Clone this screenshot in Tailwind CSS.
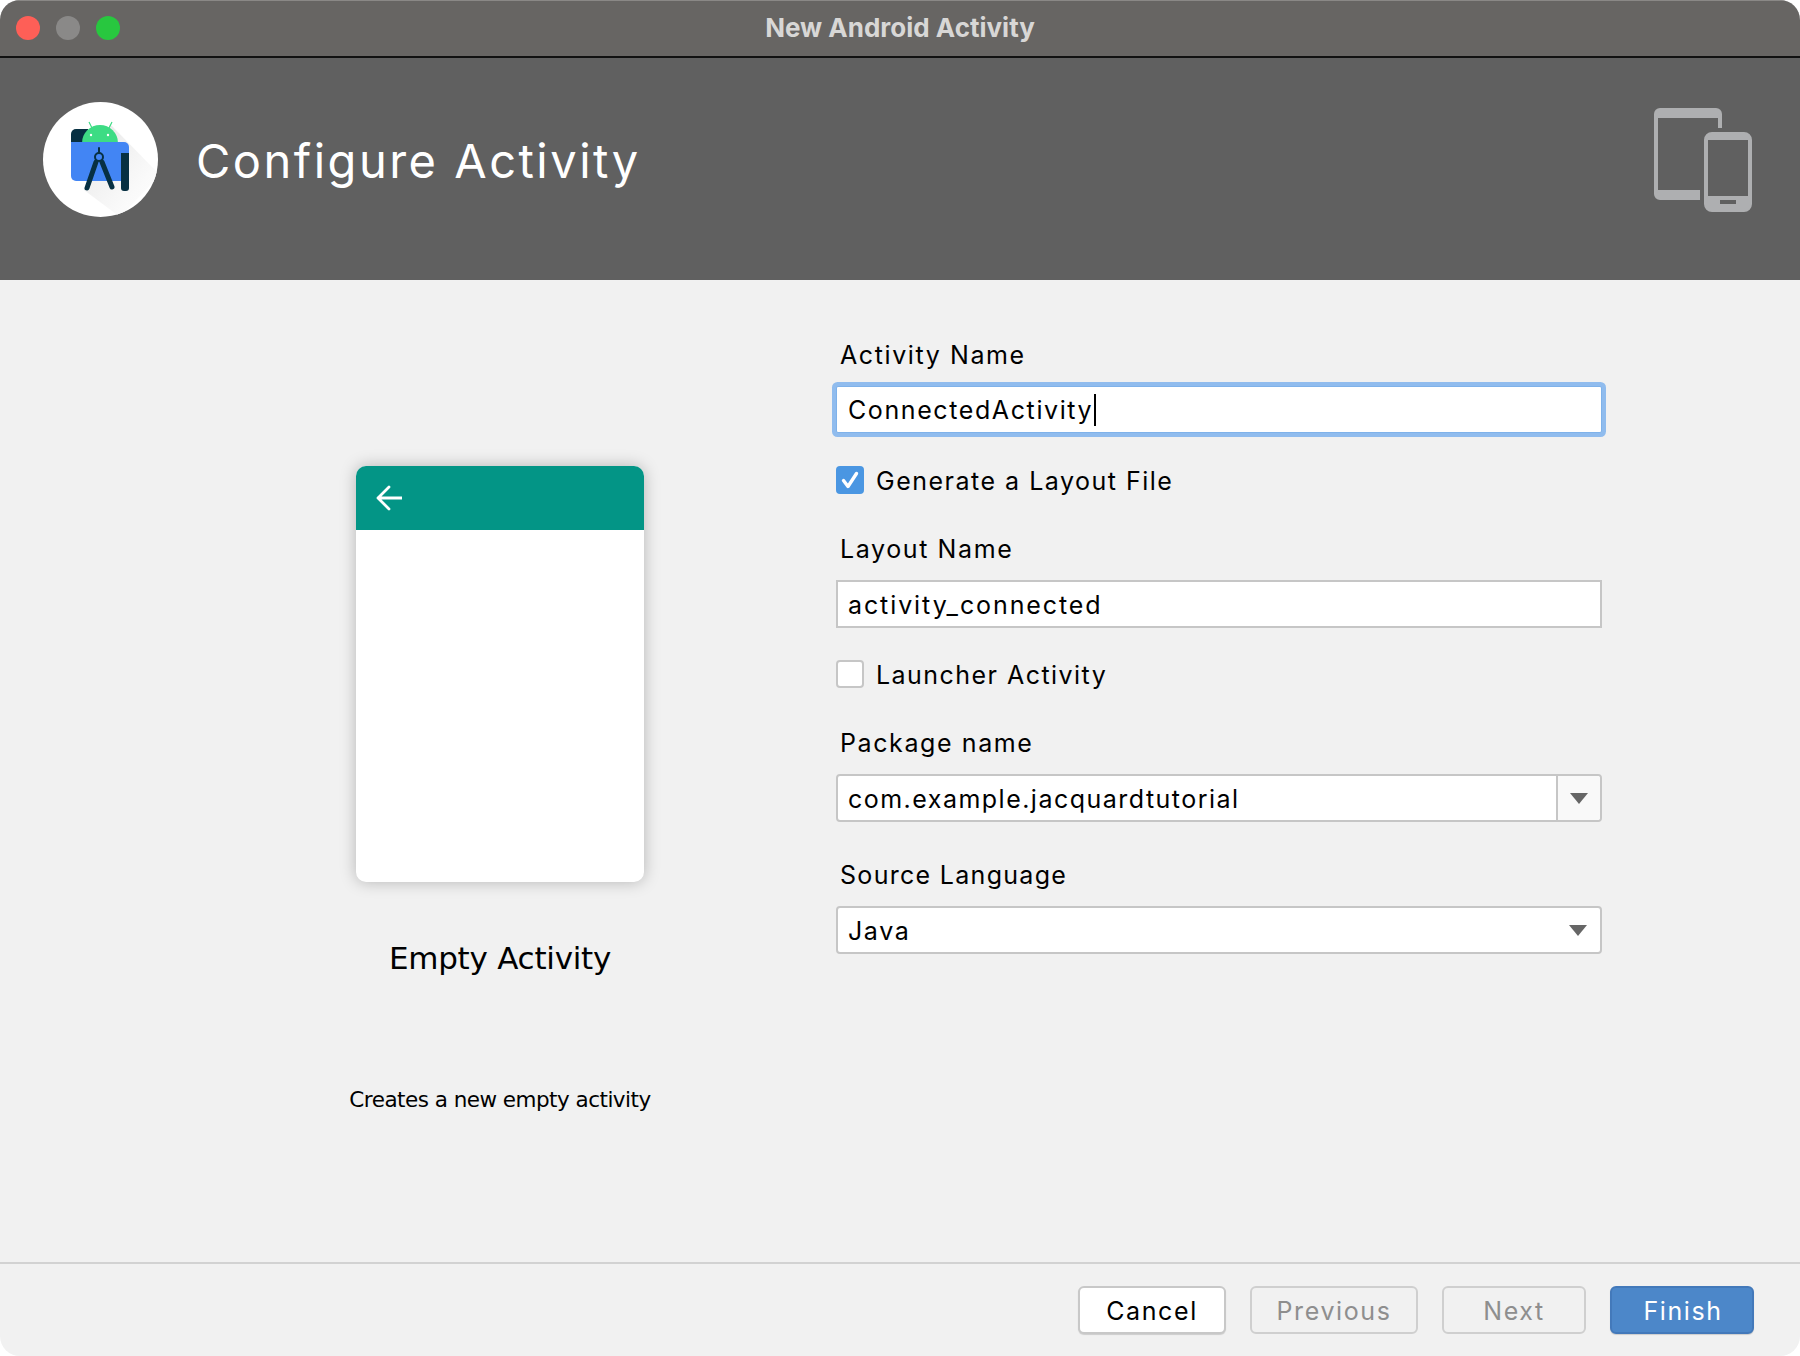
<!DOCTYPE html>
<html lang="en">

<head>
    <meta charset="UTF-8">
    <meta name="viewport" content="width=device-width, initial-scale=1.0">
    <title>New Android Activity</title>
    <script src="https://cdn.jsdelivr.net/npm/@tailwindcss/browser@4"></script>
</head>

<body class="bg-white font-['Inter',sans-serif] text-black">
    <div class="w-[1800px] h-[1356px] flex flex-col rounded-[20px] overflow-hidden bg-[#f1f1f1]">

        <!-- Title bar -->
        <div class="relative h-[58px] shrink-0 flex items-center bg-[#676563] border-t border-[#8a8886] border-b-2 border-b-[#111111] pb-[1px]">
            <div class="flex gap-4 pl-4">
                <div class="w-6 h-6 rounded-full bg-[#fe5f57]"></div>
                <div class="w-6 h-6 rounded-full bg-[#8a8988]"></div>
                <div class="w-6 h-6 rounded-full bg-[#28c73f]"></div>
            </div>
            <div class="absolute inset-x-0 text-center text-[26px] font-bold text-[#d8d7d6] pb-[2px]">New Android Activity</div>
        </div>

        <!-- Header -->
        <div class="h-[222px] shrink-0 bg-[#606060] flex items-center pl-[43px] pr-[48px] pb-[20px]">
            <svg width="115" height="115" viewBox="43 102 115 115" class="shrink-0">
                <defs>
                    <clipPath id="logoClip"><circle cx="100.5" cy="159.5" r="57.5"></circle></clipPath>
                    <linearGradient id="logoShadow" x1="0" y1="0" x2="1" y2="1">
                        <stop offset="0" stop-color="#e6e6e6"></stop>
                        <stop offset="0.7" stop-color="#fafafa"></stop>
                        <stop offset="1" stop-color="#ffffff"></stop>
                    </linearGradient>
                </defs>
                <circle cx="100.5" cy="159.5" r="57.5" fill="#ffffff"></circle>
                <path d="M110 124 L160 175 L120 217 L84 190 Z" fill="url(#logoShadow)" clip-path="url(#logoClip)"></path>
                <path d="M76 129h12v14H71v-9a5 5 0 0 1 5-5z" fill="#073042"></path>
                <path d="M82 143a18 18 0 0 1 36 0z" fill="#3ddc84"></path>
                <path d="M89 122l4 8M112 122l-4 8" stroke="#3ddc84" stroke-width="1.2"></path>
                <circle cx="91" cy="135" r="1.2" fill="#ffffff"></circle>
                <circle cx="108" cy="135" r="1.2" fill="#ffffff"></circle>
                <path d="M71 142h53a5 5 0 0 1 5 5v34H76a5 5 0 0 1-5-5z" fill="#4285f4"></path>
                <path d="M121 153h8v35a3 3 0 0 1-3 3h-2a3 3 0 0 1-3-3z" fill="#073042"></path>
                <g fill="none" stroke="#073042" stroke-linecap="round">
                    <path d="M99 148v5" stroke-width="2"></path>
                    <circle cx="99" cy="157" r="4" stroke-width="2"></circle>
                    <path d="M96 162L87 188M102 162L112 187" stroke-width="5"></path>
                </g>
            </svg>
            <div class="ml-[38px] mt-[4px] text-[47px] tracking-[2.5px] text-white">Configure Activity</div>
            <svg width="98" height="104" viewBox="1654 108 98 104" class="ml-auto mt-[2px] shrink-0" fill="#aeafb1">
                <path d="M1660 108h56a6 6 0 0 1 6 6v14h-4v-10h-60v72h42v10h-40a6 6 0 0 1-6-6v-80a6 6 0 0 1 6-6z"></path>
                <path fill-rule="evenodd" d="M1712 132h32a8 8 0 0 1 8 8v64a8 8 0 0 1-8 8h-32a8 8 0 0 1-8-8v-64a8 8 0 0 1 8-8zM1708 140v56h40v-56zM1720 200v4h16v-4z"></path>
            </svg>
        </div>

        <!-- Body -->
        <div class="flex-1 flex">
            <!-- Template preview -->
            <div class="w-[400px] ml-[300px] shrink-0 flex flex-col items-center pt-[186px]">
                <div class="w-[288px] h-[416px] bg-white rounded-[10px] overflow-hidden shadow-[0_0_16px_rgba(0,0,0,0.25)]">
                    <div class="h-16 bg-[#039586] flex items-center pl-[20px]">
                        <svg width="26" height="26" viewBox="0 0 26 26" fill="none" stroke="#ffffff" stroke-width="2.8" stroke-linecap="round" stroke-linejoin="round">
                            <path d="M2 13h24M13 2L2 13l11 11"></path>
                        </svg>
                    </div>
                </div>
                <div class="mt-[56px] font-['DejaVu_Sans',sans-serif] text-[31px] tracking-[-0.25px] leading-10 whitespace-nowrap">Empty Activity</div>
                <div class="mt-[106px] font-['DejaVu_Sans',sans-serif] text-[21.5px] tracking-[-0.52px] leading-8 whitespace-nowrap">Creates a new empty activity</div>
            </div>

            <!-- Form -->
            <div class="w-[766px] ml-[136px] pt-[59px] text-[25px] tracking-[1.6px] flex flex-col">
                <label class="h-8 leading-8 pl-1 mb-[15px]">Activity Name</label>
                <div class="h-[47px] bg-white border border-[#7fb2ea] ring-4 ring-[#90bcee] rounded-[2px] flex items-center pl-[11px] pt-[3px]">
                    <span>ConnectedActivity</span>
                    <span class="w-[2px] h-8 bg-black ml-[1px] -mt-[2px]"></span>
                </div>

                <div class="h-7 mt-[33px] flex items-center gap-[12px]">
                    <div class="w-7 h-7 rounded-[4px] bg-[#4a96e2] flex items-center justify-center">
                        <svg width="20" height="20" viewBox="0 0 20 20" fill="none" stroke="#ffffff" stroke-width="3.4" stroke-linecap="round" stroke-linejoin="round">
                            <path d="M3.5 10.5l4.5 6 8.5-13"></path>
                        </svg>
                    </div>
                    <span class="pt-[3px] tracking-[1.5px]">Generate a Layout File</span>
                </div>

                <label class="h-8 leading-8 pl-1 mt-[39px] mb-[15px]">Layout Name</label>
                <div class="h-[48px] bg-white border-2 border-[#c6c6c6] flex items-center pl-[10px] pt-[3px] tracking-[1.9px]">activity_connected</div>

                <div class="h-7 mt-[32px] flex items-center gap-[12px]">
                    <div class="w-7 h-7 rounded-[4px] bg-white border-2 border-[#c6c6c6]"></div>
                    <span class="pt-[3px] tracking-[1.46px]">Launcher Activity</span>
                </div>

                <label class="h-8 leading-8 pl-1 mt-[39px] mb-[15px]">Package name</label>
                <div class="h-[48px] bg-white border-2 border-[#c6c6c6] rounded-[4px] flex items-center pl-[10px]">
                    <span class="flex-1 pt-[3px] tracking-[1.48px]">com.example.jacquardtutorial</span>
                    <div class="w-[44px] h-full bg-[#f9f9f9] border-l-2 border-[#c6c6c6] rounded-r-[3px] flex items-center justify-center">
                        <svg width="18" height="11" viewBox="0 0 18 11" fill="#666666"><path d="M0 0h18L9 11z"></path></svg>
                    </div>
                </div>

                <label class="h-8 leading-8 pl-1 mt-[37px] mb-[15px] tracking-[1.3px]">Source Language</label>
                <div class="h-[48px] bg-white border-2 border-[#c6c6c6] rounded-[4px] flex items-center pl-[10px]">
                    <span class="flex-1 pt-[3px]">Java</span>
                    <div class="w-[44px] h-full flex items-center justify-center">
                        <svg width="18" height="11" viewBox="0 0 18 11" fill="#666666"><path d="M0 0h18L9 11z"></path></svg>
                    </div>
                </div>
            </div>
        </div>

        <!-- Footer -->
        <div class="h-[94px] shrink-0 border-t-2 border-[#d2d2d2] flex items-start justify-end gap-6 pt-[22px] pr-[46px] text-[25px] tracking-[1.6px]">
            <button class="w-[148px] h-12 pt-[3px] bg-white border-2 border-[#c8c8c8] rounded-[6px] shadow-[0_1px_1px_rgba(0,0,0,0.15)]">Cancel</button>
            <button class="w-[168px] h-12 pt-[3px] border-2 border-[#cfcfcf] rounded-[6px] text-[#8e8e8e]">Previous</button>
            <button class="w-[144px] h-12 pt-[3px] border-2 border-[#cfcfcf] rounded-[6px] text-[#8e8e8e]">Next</button>
            <button class="w-[144px] h-12 pt-[3px] pl-[2px] bg-[#4c87c9] border-2 border-[#4379ba] rounded-[6px] text-white shadow-[0_1px_1px_rgba(0,0,0,0.15)]">Finish</button>
        </div>
    </div>
</body>

</html>
